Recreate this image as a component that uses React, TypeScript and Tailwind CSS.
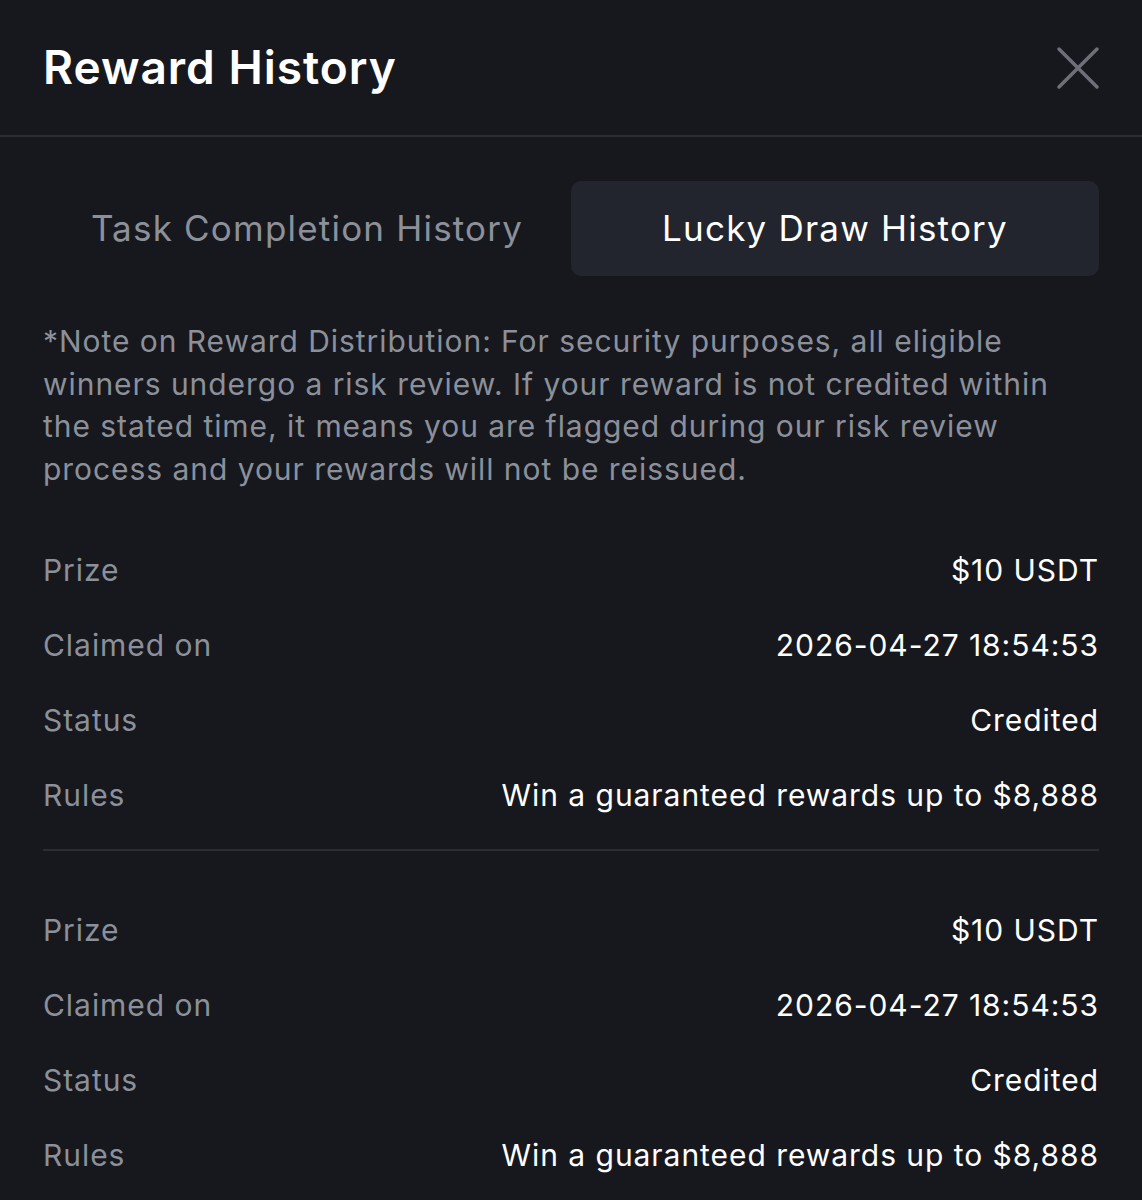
import { useState } from 'react';

const rows = [
  { label: 'Prize', value: '$10 USDT' },
  { label: 'Claimed on', value: '2026-04-27 18:54:53' },
  { label: 'Status', value: 'Credited' },
  { label: 'Rules', value: 'Win a guaranteed rewards up to $8,888' },
];

const RecordGroup = ({ last }: { last?: boolean }) => (
  <div className={last ? 'pt-[42px]' : 'pb-4 border-b-2 border-[#2b2d35]'}>
    {rows.map((row) => (
      <div
        key={row.label}
        className="flex h-[75px] items-center justify-between text-[30px] tracking-[0.95px]"
      >
        <span className="text-[#8b909a]">{row.label}</span>
        <span className="text-white">{row.value}</span>
      </div>
    ))}
  </div>
);

const App = () => {
  const [tab, setTab] = useState<'task' | 'lucky'>('lucky');

  return (
    <div
      className="min-h-[1200px] w-[1142px] bg-[#17181d] text-white"
      style={{ fontFamily: 'Inter, "Noto Sans", sans-serif' }}
    >
      <div className="flex h-[137px] items-center justify-between border-b-2 border-[#2a2c33] px-[43px]">
        <h2 className="text-[46px] font-semibold tracking-[1px]">Reward History</h2>
        <button className="mr-[-1px] text-[#6d7079]">
          <svg width="44" height="44" viewBox="0 0 44 44" fill="none" stroke="currentColor" strokeWidth="3.5" strokeLinecap="round">
            <path d="M3 3L41 41M41 3L3 41" />
          </svg>
        </button>
      </div>

      <div className="px-[43px]">
        <div className="mt-[44px] grid h-[95px] grid-cols-2">
          <button
            onClick={() => setTab('task')}
            className={`rounded-[10px] text-[35px] tracking-[1.2px] ${tab === 'task' ? 'bg-[#22252d] text-white' : 'text-[#8b909a]'}`}
          >
            Task Completion History
          </button>
          <button
            onClick={() => setTab('lucky')}
            className={`rounded-[10px] text-[35px] tracking-[1.2px] ${tab === 'lucky' ? 'bg-[#22252d] text-white' : 'text-[#8b909a]'}`}
          >
            Lucky Draw History
          </button>
        </div>

        <p className="mt-[44px] text-[30px] leading-[42.5px] tracking-[0.95px] text-[#8b909a]">
          *Note on Reward Distribution: For security purposes, all eligible winners undergo a risk review. If
          your reward is not credited within the stated time, it means you are flagged during our risk review
          process and your rewards will not be reissued.
        </p>

        <div className="mt-[43px]">
          <RecordGroup />
          <RecordGroup last />
        </div>
      </div>
    </div>
  );
};

export default App;
